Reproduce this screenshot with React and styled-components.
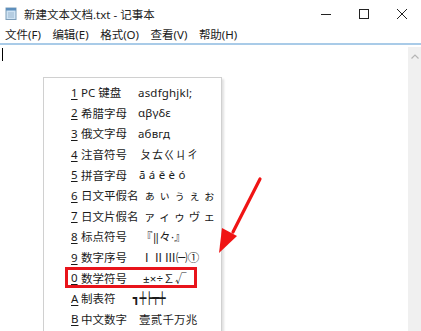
import React from "react"
import styled, { createGlobalStyle } from "styled-components"

const GlobalStyle = createGlobalStyle`
	html, body {
		margin: 0;
		padding: 0;
		background: #fff;
	}
	body {
		font-family: "Noto Sans", "Noto Sans CJK SC", sans-serif;
	}
`

const menus = ["文件(F)", "编辑(E)", "格式(O)", "查看(V)", "帮助(H)"]

const symbolRows = [
	{ key: "1", label: "PC 键盘", sample: "asdfghjkl;", shift: 0 },
	{ key: "2", label: "希腊字母", sample: "αβγδε", shift: 0 },
	{ key: "3", label: "俄文字母", sample: "абвгд", shift: 0 },
	{ key: "4", label: "注音符号", sample: "ㄆㄊㄍㄐㄔ", shift: 2 },
	{ key: "5", label: "拼音字母", sample: "ā á ě è ó", shift: 1 },
	{ key: "6", label: "日文平假名", sample: "ぁ ぃ ぅ ぇ ぉ", shift: 6 },
	{ key: "7", label: "日文片假名", sample: "ァ ィ ゥ ヴ ェ", shift: 6 },
	{ key: "8", label: "标点符号", sample: "『‖々·』", shift: 3 },
	{ key: "9", label: "数字序号", sample: "ⅠⅡⅢ㈠①", shift: 3 },
	{ key: "0", label: "数学符号", sample: "±×÷∑√", shift: 5 },
	{ key: "A", label: "制表符", sample: "┓┿┝┯┿", shift: -5, boxChars: true },
	{ key: "B", label: "中文数字", sample: "壹贰千万兆", shift: 1 },
]

const NotepadIcon = () => (
	<svg width="12" height="13" viewBox="0 0 12 13">
		<rect x="1" y="1" width="10" height="11.5" fill="#cfe3f3" stroke="#7d9db8" strokeWidth="1" />
		<rect x="1" y="1" width="10" height="2.5" fill="#5d8fbd" />
		<line x1="3" y1="6" x2="9" y2="6" stroke="#9bb7cf" />
		<line x1="3" y1="8" x2="9" y2="8" stroke="#9bb7cf" />
		<line x1="3" y1="10" x2="9" y2="10" stroke="#9bb7cf" />
	</svg>
)

const Arrow = () => (
	<ArrowSvg width="50" height="80" viewBox="0 0 50 80">
		<line x1="41" y1="3" x2="14" y2="56" stroke="#f01414" strokeWidth="3.2" strokeLinecap="round" />
		<polygon points="0,77 3,52 18,60" fill="#f01414" />
	</ArrowSvg>
)

const App = () => {
	return (
		<>
			<GlobalStyle />
			<Window>
				<TitleBar>
					<NotepadIcon />
					<Title>新建文本文档.txt - 记事本</Title>
					<Controls>
						<Control>
							<svg width="10" height="10" viewBox="0 0 10 10">
								<line x1="0" y1="5.5" x2="10" y2="5.5" stroke="#222" strokeWidth="1" />
							</svg>
						</Control>
						<Control>
							<svg width="10" height="10" viewBox="0 0 10 10">
								<rect x="0.5" y="0.5" width="9" height="9" fill="none" stroke="#222" strokeWidth="1" />
							</svg>
						</Control>
						<Control>
							<svg width="10" height="10" viewBox="0 0 10 10">
								<path d="M0 0 L10 10 M10 0 L0 10" stroke="#222" strokeWidth="1" />
							</svg>
						</Control>
					</Controls>
				</TitleBar>
				<MenuBar>
					{menus.map(m => <MenuLabel key={m}>{m}</MenuLabel>)}
				</MenuBar>
				<Editor>
					<TextArea>
						<Caret />
					</TextArea>
					<Scrollbar>
						<svg width="8" height="5" viewBox="0 0 8 5">
							<path d="M0.5 4.5 L4 1 L7.5 4.5" fill="none" stroke="#b5b5b5" strokeWidth="1.2" />
						</svg>
					</Scrollbar>
					<SymbolMenu>
						{symbolRows.map(row => (
							<SymbolRow key={row.key}>
								<Hotkey>{row.key}</Hotkey>
								<RowLabel>{row.label}</RowLabel>
								<Sample shift={row.shift} boxChars={row.boxChars}>{row.sample}</Sample>
							</SymbolRow>
						))}
					</SymbolMenu>
					<Highlight />
					<Arrow />
				</Editor>
			</Window>
		</>
	)
}

const Window = styled.div`
	display: flex;
	flex-direction: column;
	width: 421px;
	height: 331px;
	overflow: hidden;
	background: #fff;
	color: #1a1a1a;
`

const TitleBar = styled.div`
	display: flex;
	align-items: center;
	height: 27px;
	padding-left: 5px;
	gap: 7px;
`

const Title = styled.div`
	font-size: 11.5px;
	color: #222;
	flex-grow: 1;
	padding-top: 1px;
`

const Controls = styled.div`
	display: flex;
	align-self: stretch;
`

const Control = styled.div`
	display: flex;
	align-items: center;
	justify-content: center;
	width: 38px;
	padding-top: 1px;
`

const MenuBar = styled.div`
	display: flex;
	align-items: center;
	height: 16px;
	padding-left: 5px;
	gap: 11.5px;
	border-bottom: 2px solid #a9cbe8;
`

const MenuLabel = styled.div`
	font-size: 11.5px;
	color: #1a1a1a;
	line-height: 16px;
`

const Editor = styled.div`
	position: relative;
	display: flex;
	flex-grow: 1;
	padding-top: 2px;
`

const TextArea = styled.div`
	flex-grow: 1;
	padding: 1px 0 0 2px;
`

const Caret = styled.div`
	width: 1px;
	height: 13px;
	background: #000;
`

const Scrollbar = styled.div`
	display: flex;
	justify-content: center;
	width: 13px;
	padding-top: 7px;
	background: #f0f0f0;
`

const SymbolMenu = styled.div`
	position: absolute;
	left: 43px;
	top: 32px;
	width: 177px;
	height: 280px;
	padding-top: 4px;
	background: #fff;
	border: 1px solid #d0d0d0;
	box-shadow: 2px 2px 2px rgba(0, 0, 0, 0.12);
`

const SymbolRow = styled.div`
	display: flex;
	align-items: center;
	height: 20.6px;
	padding-left: 27px;
	font-size: 11.5px;
	color: #1a1a1a;
	white-space: nowrap;
`

const Hotkey = styled.span`
	flex: none;
	width: 10px;
	text-decoration: underline;
	text-underline-offset: 2px;
	font-family: "Noto Sans", sans-serif;
`

const RowLabel = styled.span`
	flex: none;
	width: 57px;
	font-family: "Noto Sans", "Noto Sans CJK SC", sans-serif;
`

const Sample = styled.span`
	margin-left: ${props => props.shift}px;
	white-space: pre;
	font-weight: ${props => (props.boxChars ? 700 : 400)};
	font-family: ${props => (props.boxChars
		? `"DejaVu Sans Mono", monospace`
		: `"Noto Sans", "Noto Sans CJK SC", sans-serif`)};
	letter-spacing: ${props => (props.boxChars ? "-0.5px" : "0.2px")};
`

const Highlight = styled.div`
	position: absolute;
	left: 65px;
	top: 222px;
	width: 126px;
	height: 15px;
	border: 3px solid #e8141b;
`

const ArrowSvg = styled.svg`
	position: absolute;
	left: 219px;
	top: 131px;
`

export default App
